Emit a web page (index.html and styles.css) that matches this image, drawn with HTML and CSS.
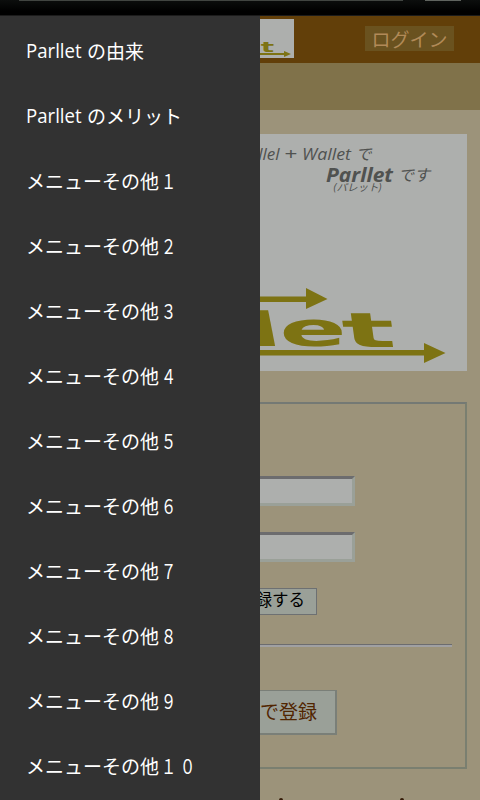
FILE: index.html
```html
<!DOCTYPE html>
<html lang="ja">
<head>
<meta charset="utf-8">
<title>Parllet</title>
<link rel="stylesheet" href="styles.css">
</head>
<body>
<div class="chrome"><span class="address"></span><span class="chrome-button"></span></div>
<div class="screen">
  <nav class="drawer">
    <a><span class="latin">Parllet</span>の由来</a>
    <a><span class="latin">Parllet</span>のメリット</a>
    <a>メニューその他<b>１</b></a>
    <a>メニューその他<b>２</b></a>
    <a>メニューその他<b>３</b></a>
    <a>メニューその他<b>４</b></a>
    <a>メニューその他<b>５</b></a>
    <a>メニューその他<b>６</b></a>
    <a>メニューその他<b>７</b></a>
    <a>メニューその他<b>８</b></a>
    <a>メニューその他<b>９</b></a>
    <a>メニューその他<b>１</b><b>０</b></a>
  </nav>
  <main class="page">
    <header class="header">
      <svg class="logo" width="34" height="39" viewBox="0 0 34 39">
        <text class="brand" transform="translate(.8 33) scale(2 1)" font-size="14">t</text>
        <path d="M0 34.100H24V32L31 35L24 38V36H0Z"/>
      </svg>
      <a class="login">ログイン</a>
    </header>
    <div class="band"></div>
    <svg class="hero" width="207" height="237" viewBox="0 0 207 237">
      <g class="slogan">
        <text x="19.500" y="26" font-size="17" text-anchor="end">Parallel</text>
        <text x="24" y="26" font-size="17" textLength="13" lengthAdjust="spacingAndGlyphs">+</text>
        <text x="42" y="26" font-size="17" textLength="49" lengthAdjust="spacingAndGlyphs">Wallet</text>
        <text x="95.500" y="26" font-size="16">で</text>
        <text x="66" y="47.500" font-size="20" font-weight="700" textLength="67" lengthAdjust="spacingAndGlyphs">Parllet</text>
        <text x="138" y="47" font-size="16">です</text>
        <text x="73.500" y="57" font-size="10" textLength="48" lengthAdjust="spacingAndGlyphs">(パレット)</text>
      </g>
      <g class="mark">
        <path d="M0 162.500H46V154L67.500 165L46 175V168H0Z"/>
        <path d="M0 216H164V209L185.500 219L164 229V221.500H0Z"/>
        <text class="brand" transform="translate(-8 212) skewX(11) scale(1.9 1)" font-size="47">l</text>
        <text class="brand" transform="translate(19.500 212) scale(2.060 1)" font-size="48">e</text>
        <text class="brand" transform="translate(84.500 212.500) skewX(8) scale(2.300 1)" font-size="48">t</text>
      </g>
    </svg>
    <section class="form">
      <div class="field"></div>
      <div class="field"></div>
      <div class="submit">登録する</div>
      <div class="rule"></div>
      <a class="register">で登録</a>
    </section>
    <div class="peek"><i></i><i></i></div>
  </main>
</div>
</body>
</html>
```
FILE: styles.css
```css
* { box-sizing: border-box; }
body {
  margin: 0;
  height: 800px;
  overflow: hidden;
  background: #000;
  font-family: "Open Sans", "Noto Sans CJK JP", sans-serif;
}
.chrome {
  height: 16px;
  display: flex;
  padding: 0 19px;
  background: linear-gradient(#0c0e0d, #000 75%);
  border-bottom: 1px solid #1b1b1b;
}
.address { width: 384px; height: 1px; background: #414541; }
.chrome-button { width: 36px; height: 1px; margin-left: 22px; background: #60645f; }
.screen { display: flex; height: 784px; }
.drawer {
  flex: none;
  width: 260px;
  padding-top: 2px;
  background: #323232;
  color: #fff;
  overflow: hidden;
}
.drawer a {
  display: flex;
  align-items: center;
  height: 65px;
  padding-left: 26px;
  font: 19px/28px "Noto Sans CJK JP", sans-serif;
  white-space: nowrap;
}
.drawer b { width: 19px; font-weight: 400; transform: scale(0.8, 1.06); }
.drawer .latin {
  width: 61px;
  font-family: "Open Sans", sans-serif;
  font-size: 20px;
  transform: scaleX(0.93);
  transform-origin: left;
}
.page {
  flex: none;
  width: 220px;
  overflow: hidden;
  background: #9c937a;
}
.header {
  height: 47px;
  display: flex;
  justify-content: space-between;
  align-items: flex-start;
  padding: 3px 26px 0 0;
  background: #623f09;
}
.logo { background: #adafad; fill: #7d7313; }
.login {
  width: 89px;
  height: 25px;
  margin-top: 7px;
  background: #6a521f;
  color: #b18a58;
  font: 19px/25px "Noto Sans CJK JP", sans-serif;
  text-align: center;
}
.band { height: 47px; background: #80724a; }
.hero { display: block; margin-top: 24px; background: #adafad; }
.slogan {
  fill: #505250;
  font-family: "Open Sans", "Noto Sans CJK JP", sans-serif;
  font-style: italic;
}
.mark { fill: #7d7313; }
.brand { font-family: "DejaVu Sans", sans-serif; font-weight: 700; }
.form {
  width: 207px;
  height: 367px;
  margin-top: 31px;
  padding-top: 72px;
  border: 2px solid #7a7f70;
  border-top-color: #747974;
  border-left: 0;
}
.field {
  width: 95px;
  height: 30px;
  margin-bottom: 26px;
  background: #adafad;
  border: 3px solid #9aa098;
  border-top-color: #6c6c6e;
  border-left: 0;
}
.submit {
  display: flex;
  justify-content: flex-end;
  width: 57px;
  height: 27px;
  padding-right: 11px;
  overflow: hidden;
  background: #9aa098;
  border: 1px solid #6d7072;
  border-left: 0;
  color: #000;
  font: 16.500px/21px "Noto Sans CJK JP", sans-serif;
  white-space: nowrap;
}
.rule {
  width: 192px;
  height: 3px;
  margin-top: 29px;
  background: #a0a0a2;
  border-top: 1px solid #6c6c6e;
}
.register {
  display: block;
  width: 77px;
  height: 45px;
  margin-top: 43px;
  background: #9aa098;
  border: 2px solid #7a7f78;
  border-top-width: 1px;
  border-left: 0;
  color: #512500;
  font: 19px/39px "Noto Sans CJK JP", sans-serif;
}
.peek { display: flex; gap: 117px; padding: 29px 0 0 19px; }
.peek i { width: 4px; height: 4px; background: #351c08; border-radius: 2px 2px 0 0; }
```
